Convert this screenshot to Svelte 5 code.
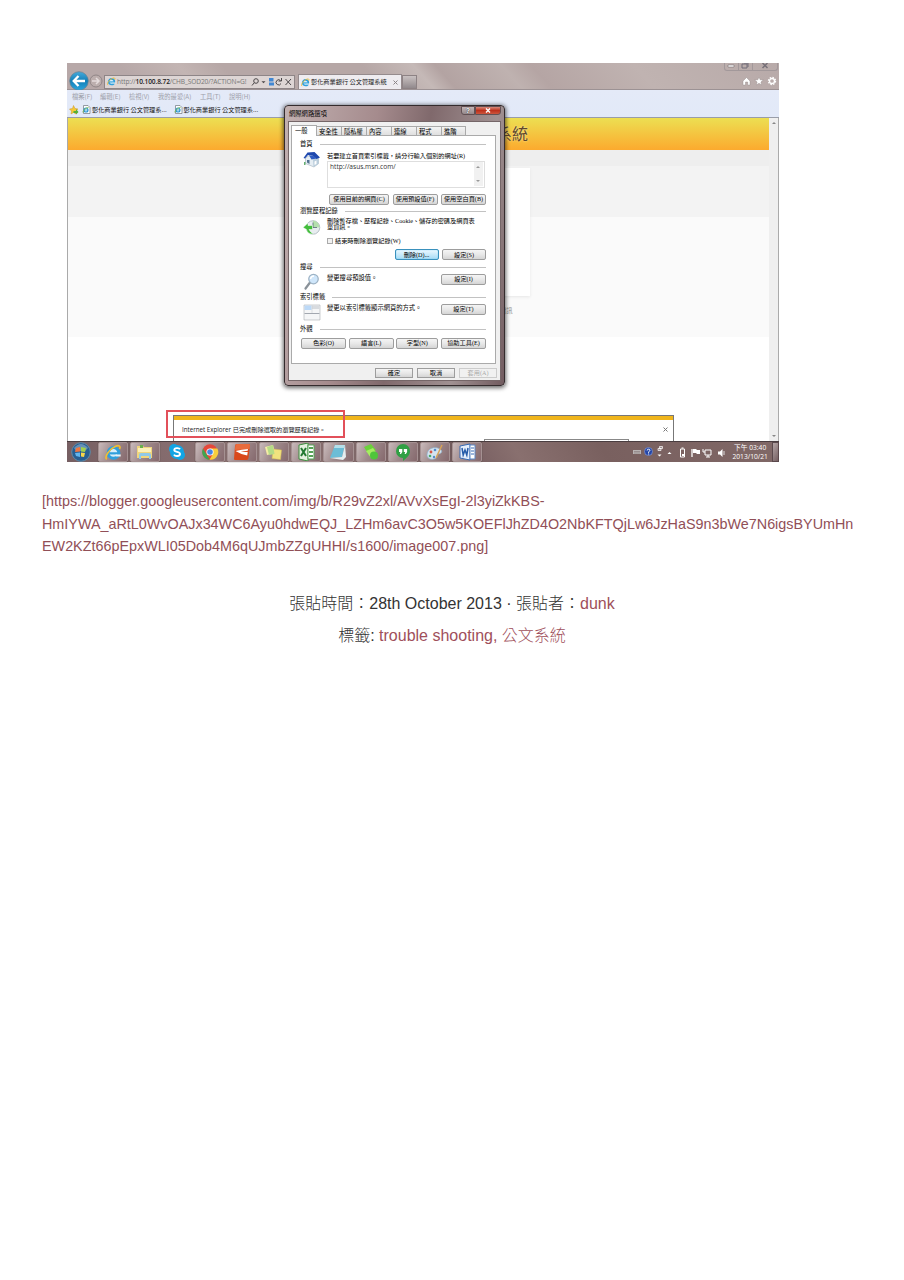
<script>
  const menus = [['檔案(F)', 28], ['編輯(E)', 29], ['檢視(V)', 29], ['我的最愛(A)', 42], ['工具(T)', 29], ['說明(H)', 28]];
  const tabs = [['一般', 26], ['安全性', 25], ['隱私權', 25], ['內容', 25], ['連線', 25], ['程式', 25], ['進階', 24]];
  const apps = ['ie', 'folder', 'skype', 'chrome', 'nitro', 'notes', 'excel', 'notebook', 'evernote', 'hangouts', 'paint', 'word'];
</script>

{#snippet ie(size)}
  <svg width={size} height={size} viewBox="0 0 20 20">
    <circle cx="10" cy="10.5" r="6.3" fill="#d8eefa" stroke="#2f9fdc" stroke-width="3.6" />
    <path d="M5 11h12" stroke="#2f9fdc" stroke-width="2.6" />
    <path d="M12.5 12.3h6v2.4h-6z" fill="#e8f1f6" />
    <path d="M2 18C-1 15 5 6 12 3c4-2 7-1 5 3" fill="none" stroke="#f0bd32" stroke-width="2" />
  </svg>
{/snippet}

{#snippet pageIcon()}
  <svg width="9" height="9" viewBox="0 0 18 18">
    <path d="M3 1h9l4 4v12H3z" fill="#fff" stroke="#6d757e" stroke-width="1.4" />
    <circle cx="8" cy="10" r="4" fill="none" stroke="#2a95d2" stroke-width="2.3" />
    <path d="M4 10h8" stroke="#2a95d2" stroke-width="1.8" />
    <path d="M2 15C1 12 8 5 13 5" stroke="#79bc43" stroke-width="1.8" fill="none" />
  </svg>
{/snippet}

{#snippet appIcon(name)}
  {#if name === 'ie'}
    {@render ie(17)}
  {:else}
    <svg width="18" height="18" viewBox="0 0 18 18">
      {#if name === 'folder'}
        <path d="M1 3h6l1 1h8v11H1z" fill="#f0d67c" />
        <path d="M2 5h13v4H2z" fill="#fbf0b9" />
        <path d="M4 2h3v3H4z" fill="#69b04c" />
        <path d="M3 16v-4q0-2 2-2h8q2 0 2 2v4h-2v-3H5v3z" fill="#8fc9e8" />
      {:else if name === 'skype'}
        <circle cx="6" cy="6" r="5" fill="#12a5e4" /><circle cx="12" cy="12" r="5" fill="#12a5e4" /><circle cx="9" cy="9" r="7" fill="#12a5e4" />
        <path d="M12 6.2C11 4.6 6.3 4.7 6.3 7c0 2.4 5.7 1.4 5.7 4 0 2.5-5 2.6-6 .6" fill="none" stroke="#fff" stroke-width="1.9" />
      {:else if name === 'chrome'}
        <circle cx="9" cy="9" r="7.7" fill="#e5483a" />
        <path d="M2 5.5 7 14l2 2.7A7.7 7.7 0 0 1 2 5.5z" fill="#3fa650" />
        <path d="M9 5.6h7.4A7.7 7.7 0 0 1 8.5 16.7l3.5-6z" fill="#f8cf3d" />
        <circle cx="9" cy="9" r="3.6" fill="#fff" /><circle cx="9" cy="9" r="2.8" fill="#4687e6" />
      {:else if name === 'nitro'}
        <path d="M4 1h12q1 0 1 1l-1.500 13q0 2-2 2H2q-1 0-1-1L2 3q0-2 2-2z" fill="#d9481b" />
        <path d="M4 1h12q1 0 1 1l-.4 4L2 7l.3-4q0-2 1.700-2z" fill="#e96b3c" />
        <path d="M2.500 8q6-1.500 12.500-2l-.3 1.700q-4 .3-7 1.300h7l-.5 3.500Q8 11.500 2.500 8z" fill="#fff" />
      {:else if name === 'notes'}
        <path d="m0 4 8-2 2 8-8 2z" fill="#f5eca5" /><path d="m8 6 8.500 1-1 9.500-8.500-1z" fill="#f1e37e" stroke="#d6b954" stroke-width=".5" /><path d="m2 4 6-2 1.500 9L4 12z" fill="#b6dc86" />
      {:else if name === 'excel'}
        <path d="M2 2 11 0v18l-9-2z" fill="#e5f1df" stroke="#3e8f3f" />
        <path d="M11 2h6v14h-6z" fill="#fff" stroke="#55a255" />
        <path d="m4 5 5 8M9 5l-5 8" stroke="#237a32" stroke-width="2" /><path d="M12 5h4M12 9h4M12 13h4" stroke="#55a255" stroke-width="2" />
      {:else if name === 'notebook'}
        <path d="M6 2h10l-3 12-12 1z" fill="#6cbdd6" /><path d="M6 2h10l-1 3H5z" fill="#b5dfe9" /><path d="m1 15 12-1 3-12 1 12-3 3z" fill="#e5eef0" />
      {:else if name === 'evernote'}
        <path d="m2 4 7-3 5 6-7 5z" fill="#6bd23a" /><path d="m4 8 7-3 4 6-6 4z" fill="#a5ed61" /><circle cx="12" cy="12.5" r="4" fill="#4fc53b" />
      {:else if name === 'hangouts'}
        <path d="M9 1a7 7 0 0 1 7 7c0 5-4 7-7 10v-3a7 7 0 0 1 0-14z" fill="#2fa044" />
        <path d="M5 6h3.3v3L7 11H5.8l.6-2H5zM9.8 6h3.3v3l-1.3 2h-1.2l.6-2H9.8z" fill="#fff" />
      {:else if name === 'paint'}
        <path d="M1 12C1 5 9 3 14 6c4 3 0 5-2 5s1 4-4 5c-4 1-7-1-7-4z" fill="#d3e3ef" stroke="#8eb0ca" stroke-width=".7" />
        <circle cx="5" cy="9" r="1.4" fill="#d65545" /><circle cx="9" cy="7" r="1.3" fill="#5189cb" /><circle cx="4" cy="13" r="1.3" fill="#4ca968" /><circle cx="8" cy="14" r="1.2" fill="#5189cb" />
        <path d="m10 15 6-13" stroke="#d7a257" stroke-width="1.5" />
      {:else}
        <path d="M2 3 12 1v16l-10-2z" fill="#e6effc" stroke="#386bb5" /><path d="M12 2h5v14h-5z" fill="#fff" stroke="#5c87c6" />
        <path d="m4 5 1.2 7L7 7l1.8 5L10 5" fill="none" stroke="#265ba9" stroke-width="1.5" /><path d="M13 5h3M13 8h3M13 11h3" stroke="#386bb5" />
      {/if}
    </svg>
  {/if}
{/snippet}

<main>
  <section class="desktop">
    <header class="chrome">
      <div class="winbtns">
        <span><svg width="8" height="6"><path d="M1 2h6v2H1z" fill="#fff" stroke="#7b7173" stroke-width=".6" /></svg></span>
        <span><svg width="8" height="6"><path d="M1 1h5v4H1zM3 0h4v4" fill="none" stroke="#716d78" /></svg></span>
        <span class="wide"><svg width="8" height="6"><path d="m1.500 0 5 5M6.500 0l-5 5" stroke="#777078" stroke-width="1.500" /></svg></span>
      </div>
      <div class="nav">
        <svg class="back" width="20" height="20" viewBox="0 0 20 20">
          <defs><linearGradient id="blue" x2="0" y2="1"><stop stop-color="#45aadb" /><stop offset=".5" stop-color="#137fb8" /><stop offset="1" stop-color="#2ba5dc" /></linearGradient></defs>
          <circle cx="10" cy="10" r="9.3" fill="url(#blue)" stroke="#617f92" stroke-width=".7" /><path d="M16 10H5m4.500-5L4.700 10l4.800 5" fill="none" stroke="#fff" stroke-width="2.300" />
        </svg>
        <svg class="fwd" width="14" height="14" viewBox="0 0 14 14"><circle cx="7" cy="7" r="6" fill="#bcaead" stroke="#918687" /><path d="M3 7h7M7 4l3 3-3 3" fill="none" stroke="#e5dcdc" stroke-width="1.500" /></svg>
        <div class="address">
          {@render ie(9)}
          <span class="url">http://<b>10.100.8.72</b>/CHB_SOD20/?ACTION=G!</span>
          <svg width="43" height="10" viewBox="0 0 43 10">
            <g fill="none" stroke="#4c484a"><circle cx="5" cy="4" r="2.300" /><path d="M3.300 5.700 1 8.500" /><path d="m34.500 2 5.500 6M40 2l-5.500 6" /><path d="M29.500 3.500a2.600 2.600 0 1 0 .5 3M30.500 1v3h-3" /></g>
            <path d="M10.500 4.300h4l-2 2z" fill="#4c484a" /><path d="M18 1h4.500v3.500H18zM18 5.500h5v3h-5z" fill="#4187d3" />
          </svg>
        </div>
        <div class="tab">{@render ie(9)}<span>彰化商業銀行 公文管理系統</span><svg class="x" width="5" height="5"><path d="m.5.5 4 4m0-4-4 4" stroke="#8b8587" /></svg></div>
        <div class="newtab"></div>
        <svg class="tools" width="36" height="10" viewBox="0 0 36 10">
          <path d="M1 5 4.500 1.500 8 5v4H5.700V6H3.500v3H1z" fill="#fff" stroke="#8f8587" stroke-width=".4" />
          <path d="m17 1 1.200 2.800 3.100.2-2.400 2 .8 3-2.700-1.700L14.300 9l.8-3-2.400-2 3.100-.2z" fill="#fff" stroke="#8f8587" stroke-width=".4" />
          <circle cx="30" cy="5" r="2.500" fill="none" stroke="#fff" stroke-width="1.300" /><circle cx="30" cy="5" r="3.600" fill="none" stroke="#fff" stroke-width="1.200" stroke-dasharray="1.500 1.330" />
        </svg>
      </div>
    </header>
    <div class="bars">
      <div class="menu">{#each menus as [label, width]}<span style="width:{width}px">{label}</span>{/each}</div>
      <div class="favs">
        <svg width="10" height="10" viewBox="0 0 20 20"><path d="m9 1 3 6 6 1-5 4 1 6-5-3-5 3 1-6-4-4 6-1z" fill="#f6c934" stroke="#cb942b" /><path d="M9 12h5V8l5 6-5 5v-3H9z" fill="#55af37" /></svg>
        <div>{@render pageIcon()}<span>彰化商業銀行 公文管理系...</span></div>
        <div>{@render pageIcon()}<span>彰化商業銀行 公文管理系...</span></div>
      </div>
    </div>
    <div class="site">
      <div class="page">
        <div class="banner"></div><div class="band one"></div><div class="band two"></div><div class="band three"></div>
        <div class="card"></div>
        <h1>系統</h1>
        <small>資訊</small>
      </div>
      <div class="scroll"><svg width="6" height="4"><path d="m1 3 2-2 2 2z" fill="#888" /></svg><svg width="6" height="4"><path d="m1 1 2 2 2-2z" fill="#888" /></svg></div>
      <div class="notice"><span>Internet Explorer 已完成刪除選取的瀏覽歷程記錄。</span><svg class="x" width="5" height="5"><path d="m.5.5 4 4m0-4-4 4" stroke="#777" /></svg><div class="shelf"></div></div>
      <div class="marker"></div>
    </div>

    <div class="dialog">
      <div class="title"><span>網際網路選項</span><b class="help">?</b><b class="close"><svg width="6" height="5"><path d="m1 .5 4 4m0-4-4 4" stroke="#fff" stroke-width="1.400" /></svg></b></div>
      <div class="body">
        <div class="tabs">{#each tabs as [label, width], i}<span class:active={i === 0} style="width:{width}px">{label}</span>{/each}</div>
        <div class="pane">
          <div class="group home">
            <h2>首頁</h2>
            <div class="row">
              <svg class="gi" width="18" height="17" viewBox="0 0 36 34"><path d="m5 14 10-7 16 5v13l-9 7-17-7z" fill="#e5edf3" stroke="#91a2b1" /><path d="m20 17 11-4v13l-10 6z" fill="#b9cddc" /><path d="m1 14 8-11 14-1 11 11-7 3-8-7-9-1-6 7z" fill="#1f49ae" /><path d="M12 9h8l7 6-10 2z" fill="#2f5cc2" /><path d="M8 18h5v8l-5-3z" fill="#52718f" /><path d="m23 21 4-2v7l-4 2z" fill="#fff" /><path d="M2 22h3v6H2z" fill="#64af70" /></svg>
              <div class="col"><p>若要建立首頁索引標籤，請分行輸入個別的網址(R)</p>
                <div class="area"><span>http://asus.msn.com/</span><div><svg width="6" height="4"><path d="m1 3 2-2 2 2z" fill="#999" /></svg><svg width="6" height="4"><path d="m1 1 2 2 2-2z" fill="#999" /></svg></div></div>
              </div>
            </div>
            <div class="buttons b1"><button style="width:60px">使用目前的網頁(C)</button><button style="width:45px">使用預設值(F)</button><button style="width:45px">使用空白頁(B)</button></div>
          </div>
          <div class="group history">
            <h2>瀏覽歷程記錄</h2>
            <div class="row">
              <svg class="gi" width="18" height="17" viewBox="0 0 36 34"><circle cx="20" cy="17" r="13.500" fill="#e8edf0" stroke="#b4bec5" stroke-width="2" /><path d="M20 17V3a14 14 0 0 1 13 14z" fill="#b4dfad" /><path d="M20 7v10h8" fill="none" stroke="#567" stroke-width="1.600" /><path d="m0 17 10-9v5h9v8h-7q3 6 9 9-12 1-14-9z" fill="#43bd3c" stroke="#fff" /></svg>
              <div class="col"><p class="wrap">刪除暫存檔、歷程記錄、Cookie、儲存的密碼及網頁表<br />單資訊。</p><p class="check"><i></i>結束時刪除瀏覽記錄(W)</p></div>
            </div>
            <div class="buttons b2"><button class="hot" style="width:44px">刪除(D)...</button><button style="width:44px">設定(S)</button></div>
          </div>
          <div class="group search">
            <h2>搜尋</h2>
            <div class="row">
              <svg class="gi" width="18" height="18" viewBox="0 0 36 36"><path d="M14 19 5 31" stroke="#8a9299" stroke-width="4.500" stroke-linecap="round" /><circle cx="21" cy="12" r="9.500" fill="#cfe6fa" stroke="#9db2c4" stroke-width="2.500" /><path d="M15 12q1-6 7-6" stroke="#fff" stroke-width="3" fill="none" /></svg>
              <p>變更搜尋預設值。</p><button>設定(I)</button>
            </div>
          </div>
          <div class="group index">
            <h2>索引標籤</h2>
            <div class="row">
              <svg class="gi" width="18" height="17" viewBox="0 0 36 34"><path d="M2 2h32v30H2z" fill="#f5f6f7" stroke="#989ca2" /><path d="M3 3h14v9H3z" fill="#bcd9f7" /><path d="M18 3h15v7H18z" fill="#d8dbdf" /><path d="M3 19h30" stroke="#a3a8b0" stroke-width="2" /><path d="M18 3v15" stroke="#c2c6cb" /></svg>
              <p>變更以索引標籤顯示網頁的方式。</p><button>設定(T)</button>
            </div>
          </div>
          <div class="group look">
            <h2>外觀</h2>
            <div class="buttons b3"><button>色彩(O)</button><button>語言(L)</button><button style="width:42px">字型(N)</button><button>協助工具(E)</button></div>
          </div>
        </div>
        <div class="buttons foot"><button>確定</button><button>取消</button><button class="off">套用(A)</button></div>
      </div>
    </div>

    <footer class="taskbar">
      <svg class="start" width="20" height="20" viewBox="0 0 20 20"><circle cx="10" cy="10" r="9.300" fill="#285e91" stroke="#5f8ca9" /><path d="M3 6Q10-2 17 6l-3 3H5z" fill="#8fb4d0" opacity=".6" /><path d="m5 6 4-1v4.500l-5 .5z" fill="#ee7540" /><path d="m10 5 5 1-1 4-4-.5z" fill="#a2cf4d" /><path d="m4 11 5-.5V15l-4-1z" fill="#62b6ed" /><path d="m10 10.500 4 .5-1 4-3-.5z" fill="#f8d64b" /></svg>
      {#each apps as name}<div class="app" class:plain={name === 'skype'}>{@render appIcon(name)}</div>{/each}
      <svg class="tray" width="96" height="14" viewBox="0 0 96 14">
        <path d="M2 5h8v4H2z" fill="#b9b3b3" /><path d="M3 6.500h6M3 8h6" stroke="#77696b" stroke-width=".5" />
        <circle cx="17.500" cy="6.500" r="4" fill="#2546a8" stroke="#8ea4dc" stroke-width=".6" /><path d="M16.200 5.500q0-1.300 1.400-1.300 1.300 0 1.300 1.200 0 .8-1.300 1.400v1M17.600 8.500v1" stroke="#fff" fill="none" />
        <path d="M28.500 1.500h3v2h-3zM27 3.500h3v2h-3z" fill="#a09092" stroke="#fff" stroke-width=".7" /><path d="M26.500 9.500h4l-2 2z" fill="#fff" /><path d="m36.500 9 2-2 2 2z" fill="#fff" />
        <path d="M49.500 4h4v8h-4zM50.500 3h2" fill="none" stroke="#fff" /><path d="M51 9h2v2h-2z" fill="#fff" />
        <path d="M61 4v8" stroke="#fff" stroke-width="1.300" /><path d="M62 4h3l1 1h3v4h-3l-1-1h-3z" fill="#fff" />
        <path d="M74 5h6v5h-6zM77 10v2M75 12h4M72 4v3h2" fill="none" stroke="#fff" />
        <path d="M87 6.500h2l2.500-2.500v8l-2.500-2.500h-2z" fill="#fff" /><path d="M93 6v4" stroke="#ddd" />
      </svg>
      <div class="clock"><span>下午 03:40</span><span>2013/10/21</span></div>
      <div class="peek"></div>
    </footer>
  </section>

  <p class="link"><span>[https://blogger.googleusercontent.com/img/b/R29vZ2xl/AVvXsEgI-2l3yiZkKBS-</span><span>HmIYWA_aRtL0WvOAJx34WC6Ayu0hdwEQJ_LZHm6avC3O5w5KOEFlJhZD4O2NbKFTQjLw6JzHaS9n3bWe7N6igsBYUmHn</span><span>EW2KZt66pEpxWLI05Dob4M6qUJmbZZgUHHI/s1600/image007.png]</span></p>
  <div class="meta">
    <div><span class="cjk">張貼時間：</span>28th October 2013{' · '}<span class="cjk">張貼者：</span><a>dunk</a></div>
    <div><span class="cjk">標籤</span>: <a>trouble shooting</a><a>,</a> <a class="cjk">公文系統</a></div>
  </div>
</main>

<style>
  :global(body) { background: #fff; }
  * { box-sizing: border-box; }
  svg { display: block; flex: none; }
  i { font-style: normal; }
  main { width: 904px; height: 1280px; padding: 63px 0 0 67px; font-family: "Liberation Sans", "Noto Sans CJK TC", sans-serif; overflow: hidden; }
  .desktop { position: relative; width: 712px; height: 399px; display: flex; flex-direction: column; font: 6.2px/8px "Noto Sans CJK TC", sans-serif; color: #222; white-space: nowrap; }
  .chrome { height: 27px; flex: none; background: linear-gradient(48deg, #b7a8a8 0 10%, #c3b5b3 18%, #b6a7a6 24% 43%, #c5b9b7 50%, #b3a3a2 53%, #bfb2b0 62%, #b5a5a4 66%, #c0b3b1 80%, #b8aaa9); border-bottom: 1px solid #9c9294; }
  .winbtns { display: flex; height: 8px; width: 54px; margin-left: 657px; border: 1px solid #a2989a; border-top: 0; border-radius: 0 0 3px 3px; }
  .winbtns span { width: 14px; border-right: 1px solid #a2989a; display: flex; justify-content: center; }
  .winbtns .wide { width: 25px; border: 0; }
  .nav { display: flex; height: 18px; align-items: center; padding-right: 2px; }
  .back { margin: 1px 0 0 2px; }
  .fwd { margin: 2px 1px 0 0; }
  .address { display: flex; align-items: center; width: 191px; height: 14px; margin-top: 3px; padding-left: 2px; background: #ddd5d4; border: 1px solid #8e8587; }
  .url { width: 134px; margin-left: 1px; font: 6.600px/10px "Open Sans", sans-serif; color: #777; letter-spacing: -.12px; }
  .url b { color: #222; font-weight: 600; }
  .tab { display: flex; align-items: center; width: 104px; height: 15px; margin: 3px 0 0 3px; padding-left: 2px; background: #eeecf0; border: 1px solid #958b8d; border-bottom: 0; }
  .tab span { margin-left: 1px; width: 82px; }
  .newtab { width: 15px; height: 14px; margin-top: 3px; background: linear-gradient(#c9c1c1, #928a8d); border: 1px solid #8d8284; }
  .tools { margin: 2px -1px 0 auto; }
  .bars { height: 28px; flex: none; background: linear-gradient(#e4eaf8, #e2e9f8); border-bottom: 1px solid #999da8; }
  .menu { display: flex; height: 13px; align-items: center; padding-left: 5px; color: #9da0aa; font-size: 6.3px; }
  .favs { display: flex; align-items: center; height: 13px; padding-left: 2px; font-size: 6.2px; color: #111; }
  .favs > svg { margin-right: 3px; }
  .favs div { display: flex; align-items: center; width: 91.500px; }
  .favs span { margin-left: 1px; }
  .site { position: relative; display: flex; flex: 1; background: #fff; border-left: 1px solid #aaa; overflow: hidden; }
  .page { flex: 1; }
  .banner { height: 32px; background: linear-gradient(#ecdf52, #fcaa2e); }
  .band.one { height: 16px; background: #eee; }
  .band.two { height: 51px; background: #f3f3f3; }
  .band.three { height: 120px; background: #fafafa; }
  .card { position: absolute; left: 230px; top: 50px; width: 232px; height: 128px; background: #fff; box-shadow: 0 1px 3px #e6e6e6; }
  h1 { position: absolute; margin: 0; left: 428px; top: 5px; font: 16px/20px "Noto Sans CJK TC", sans-serif; color: #60462c; text-shadow: 0 0 2px #fff3ad; }
  .page small { position: absolute; left: 432px; top: 189px; font-size: 6.3px; color: #888; }
  .scroll { width: 10px; background: #efefef; border-right: 1px solid #aaa; display: flex; flex-direction: column; justify-content: space-between; padding: 3px 2px; }
  .notice { position: absolute; left: 105px; top: 297px; width: 501px; height: 27px; display: flex; align-items: center; justify-content: space-between; padding: 2px 5px 0 8px; border: 1px solid #777; border-bottom: 1px solid #111; background: linear-gradient(#f0b51c 0 4px, #fff 4px); font: 6.2px/8px "Open Sans", "Noto Sans CJK TC", sans-serif; }
  .shelf { position: absolute; left: 310px; bottom: 0; width: 145px; height: 2px; border: 1px solid #888; border-bottom: 0; }
  .marker { position: absolute; left: 98px; top: 292px; width: 179px; height: 28px; border: 2px solid #e2505a; }
  .dialog { position: absolute; left: 217px; top: 42px; width: 221px; height: 281px; padding: 1px 3px 4px; border: 1px solid #342b2d; border-radius: 4px; background: linear-gradient(100deg, #c2b1b1, #a58b8d 35%, #80696c 55%, #a09192 80%, #715b5f); box-shadow: 0 1px 4px 1px #0009; display: flex; flex-direction: column; font-family: "Liberation Serif", "Noto Sans CJK TC", serif; color: #000; }
  .title { display: flex; height: 14px; line-height: 13px; padding-left: 1px; flex: none; }
  .title span { width: 172px; font-size: 6.3px; }
  .title b { display: flex; align-items: center; justify-content: center; height: 9px; color: #fff; font: 700 7px/7px "Liberation Sans", sans-serif; border: 1px solid #625053; margin-top: -1px; text-shadow: 0 0 1px #000; }
  .help { width: 14px; border-radius: 0 0 0 3px; background: linear-gradient(#c4b5b5, #94898b); }
  .close { width: 26px; border-radius: 0 0 3px 0; background: linear-gradient(#d78a7c, #bd311c 50%, #cc553d); }
  .body { flex: 1; min-height: 0; background: #f0f0f0; border: 1px solid #756668; padding: 3px 4px 0 2px; font-size: 6.3px; }
  .tabs { display: flex; height: 10px; align-items: flex-end; }
  .tabs span { height: 9px; line-height: 10px; padding-left: 2px; background: linear-gradient(#f3f3f3, #dfdfdf); border: 1px solid #aaa; border-width: 1px 1px 0 0; }
  .tabs .active { height: 11px; margin-bottom: -1px; background: #fff; border-left-width: 1px; padding-left: 3px; position: relative; }
  .pane { height: 229px; border: 1px solid #aaa; background: #fff; padding: 3px 9px 0 8px; }
  h2 { display: flex; align-items: center; gap: 7px; height: 10px; margin: 0; font-size: 6.3px; font-weight: 400; line-height: 10px; }
  h2::after { content: ""; flex: 1; height: 1px; margin-top: 1px; background: #c2c2c2; }
  p { margin: 0; }
  .home { height: 67px; } .history { height: 55.500px; } .search { height: 30px; } .index { height: 32.500px; }
  .row { display: flex; align-items: flex-start; }
  .gi { width: 18px; margin: 2px 6px 0 3px; }
  .home .col p { height: 10px; line-height: 11px; margin: 1px 0; font-size: 6.200px; }
  .area { width: 158px; height: 27px; display: flex; justify-content: space-between; padding: 0 1px 1px 2px; border: 1px solid #dedede; font: 6.600px/10px "Open Sans", sans-serif; color: #333; }
  .area div { width: 9px; background: #f1f1f1; display: flex; flex-direction: column; justify-content: space-between; padding: 3px 1px; }
  button { display: block; width: 45px; height: 11px; padding: 0; border: 1px solid #9d9d9d; border-radius: 2px; background: linear-gradient(#f5f5f5, #e8e8e8 50%, #d5d5d5); font: inherit; font-size: 6.2px; line-height: 8px; color: #000; text-align: center; white-space: nowrap; }
  .buttons { display: flex; justify-content: flex-end; gap: 3.500px; }
  .b1 { margin-top: 5.500px; }
  .history .gi { margin-top: 3px; }
  .wrap { line-height: 6px; margin-top: 2px; font-size: 6.200px; }
  .check { display: flex; align-items: center; gap: 2px; margin-top: 7px; font-size: 6.2px; }
  .check i { width: 6px; height: 6px; border: 1px solid #aaa; background: #f1f1f1; }
  .b2 { margin-top: 4px; }
  .hot { border-color: #3a91bd; background: linear-gradient(#eaf8ff, #a7dcf6); box-shadow: inset 0 0 1px #33b9ee; }
  .search .row, .index .row { margin-top: 2px; }
  .search p, .index p { flex: 1; line-height: 7px; }
  .search .gi { margin-top: -1px; } .index .gi { margin-top: 0; }
  .b3 { margin: 3.500px 0 0 1px; justify-content: space-between; gap: 0; }
  .foot { margin: 4px -1px 0 0; gap: 4px; }
  .foot button { width: 38px; height: 10px; border-radius: 0; }
  .foot .off { color: #aaa; border-color: #ccc; background: #f1f1f1; }
  .taskbar { height: 21px; flex: none; display: flex; align-items: center; padding-left: 4px; background: linear-gradient(60deg, #765f62, #94797a 30%, #755c5f 55%, #89706f 63%, #79605f 75%, #806867); border-top: 1px solid #4a3d40; color: #fff; }
  .start { margin-right: 7px; }
  .app { width: 30.300px; height: 20px; margin-right: 2px; display: flex; align-items: center; justify-content: center; border: 1px solid #a59192; border-radius: 2px; background: linear-gradient(115deg, #c9babb, #a08b8d 45%, #85696d); box-shadow: 0 0 1px #443; }
  .app.plain { background: none; border-color: transparent; box-shadow: none; }
  .tray { margin-left: 147px; }
  .clock { display: flex; flex-direction: column; width: 44px; text-align: center; font: 6.700px/9.500px "Open Sans", "Noto Sans CJK TC", sans-serif; margin-left: 1px; }
  .peek { width: 7px; height: 20px; margin-left: auto; border: 1px solid #5b494c; background: linear-gradient(120deg, #b4a5a6, #755f61); }
  .link { margin: 28px 0 0 -25px; font-size: 14.370px; line-height: 22.500px; color: #914f57; white-space: nowrap; }
  .link span { display: block; }
  .meta { margin: 30px 0 0 -67px; text-align: center; font-size: 16px; line-height: 32.500px; color: #333; white-space: nowrap; }
  .meta a { color: #a04f5b; }
  .cjk { font-family: "Liberation Sans", "Noto Sans CJK TC", sans-serif; font-weight: 300; }
</style>
